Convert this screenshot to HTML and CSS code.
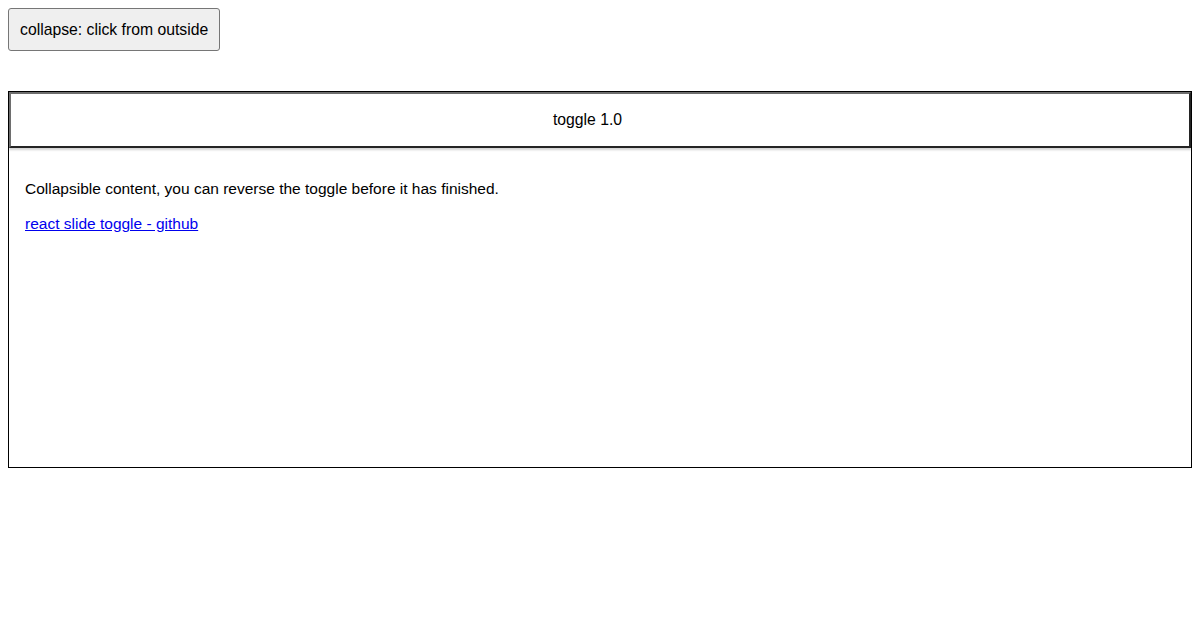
FILE: index.html
```html
<!DOCTYPE html>
<html>
<head>
<meta charset="utf-8">
<link rel="stylesheet" href="styles.css">
</head>
<body>
<button class="outside-btn">collapse: click from outside</button>
<div class="slide">
  <button class="toggle-btn">toggle 1.0</button>
  <div class="content">
    <p>Collapsible content, you can reverse the toggle before it has finished.</p>
    <p><a href="#">react slide toggle - github</a></p>
  </div>
</div>
</body>
</html>
```

FILE: styles.css
```css
body {
  margin: 8px;
  font-family: "Liberation Sans", Arial, sans-serif;
  font-size: 16px;
  color: #000;
  background: #fff;
}
.outside-btn {
  display: block;
  font-family: "Liberation Sans", Arial, sans-serif;
  font-size: 15.75px;
  line-height: 19px;
  height: 43px;
  padding: 0 11px;
  background: #efefef;
  color: #000;
  border: 1px solid #767676;
  border-radius: 3px;
}
.slide {
  margin-top: 40px;
  border: 1px solid #000;
  height: 375px;
  display: flex;
  flex-direction: column;
}
.toggle-btn {
  display: block;
  width: 100%;
  height: 56px;
  font-family: "Liberation Sans", Arial, sans-serif;
  font-size: 15.75px;
  color: #000;
  background: #fff;
  border-style: solid;
  border-width: 2px;
  border-color: #6e6e6e #242424 #242424 #6e6e6e;
  box-shadow: 0 2px 2px rgba(0, 0, 0, 0.18);
  position: relative;
  padding: 0 25px 0 0;
}
.content {
  padding: 15px 16px 16px;
  flex: 1;
}
.content p {
  margin: 16px 0;
  font-size: 15.5px;
  line-height: 19px;
}
.content a {
  color: #0000ee;
}
```
